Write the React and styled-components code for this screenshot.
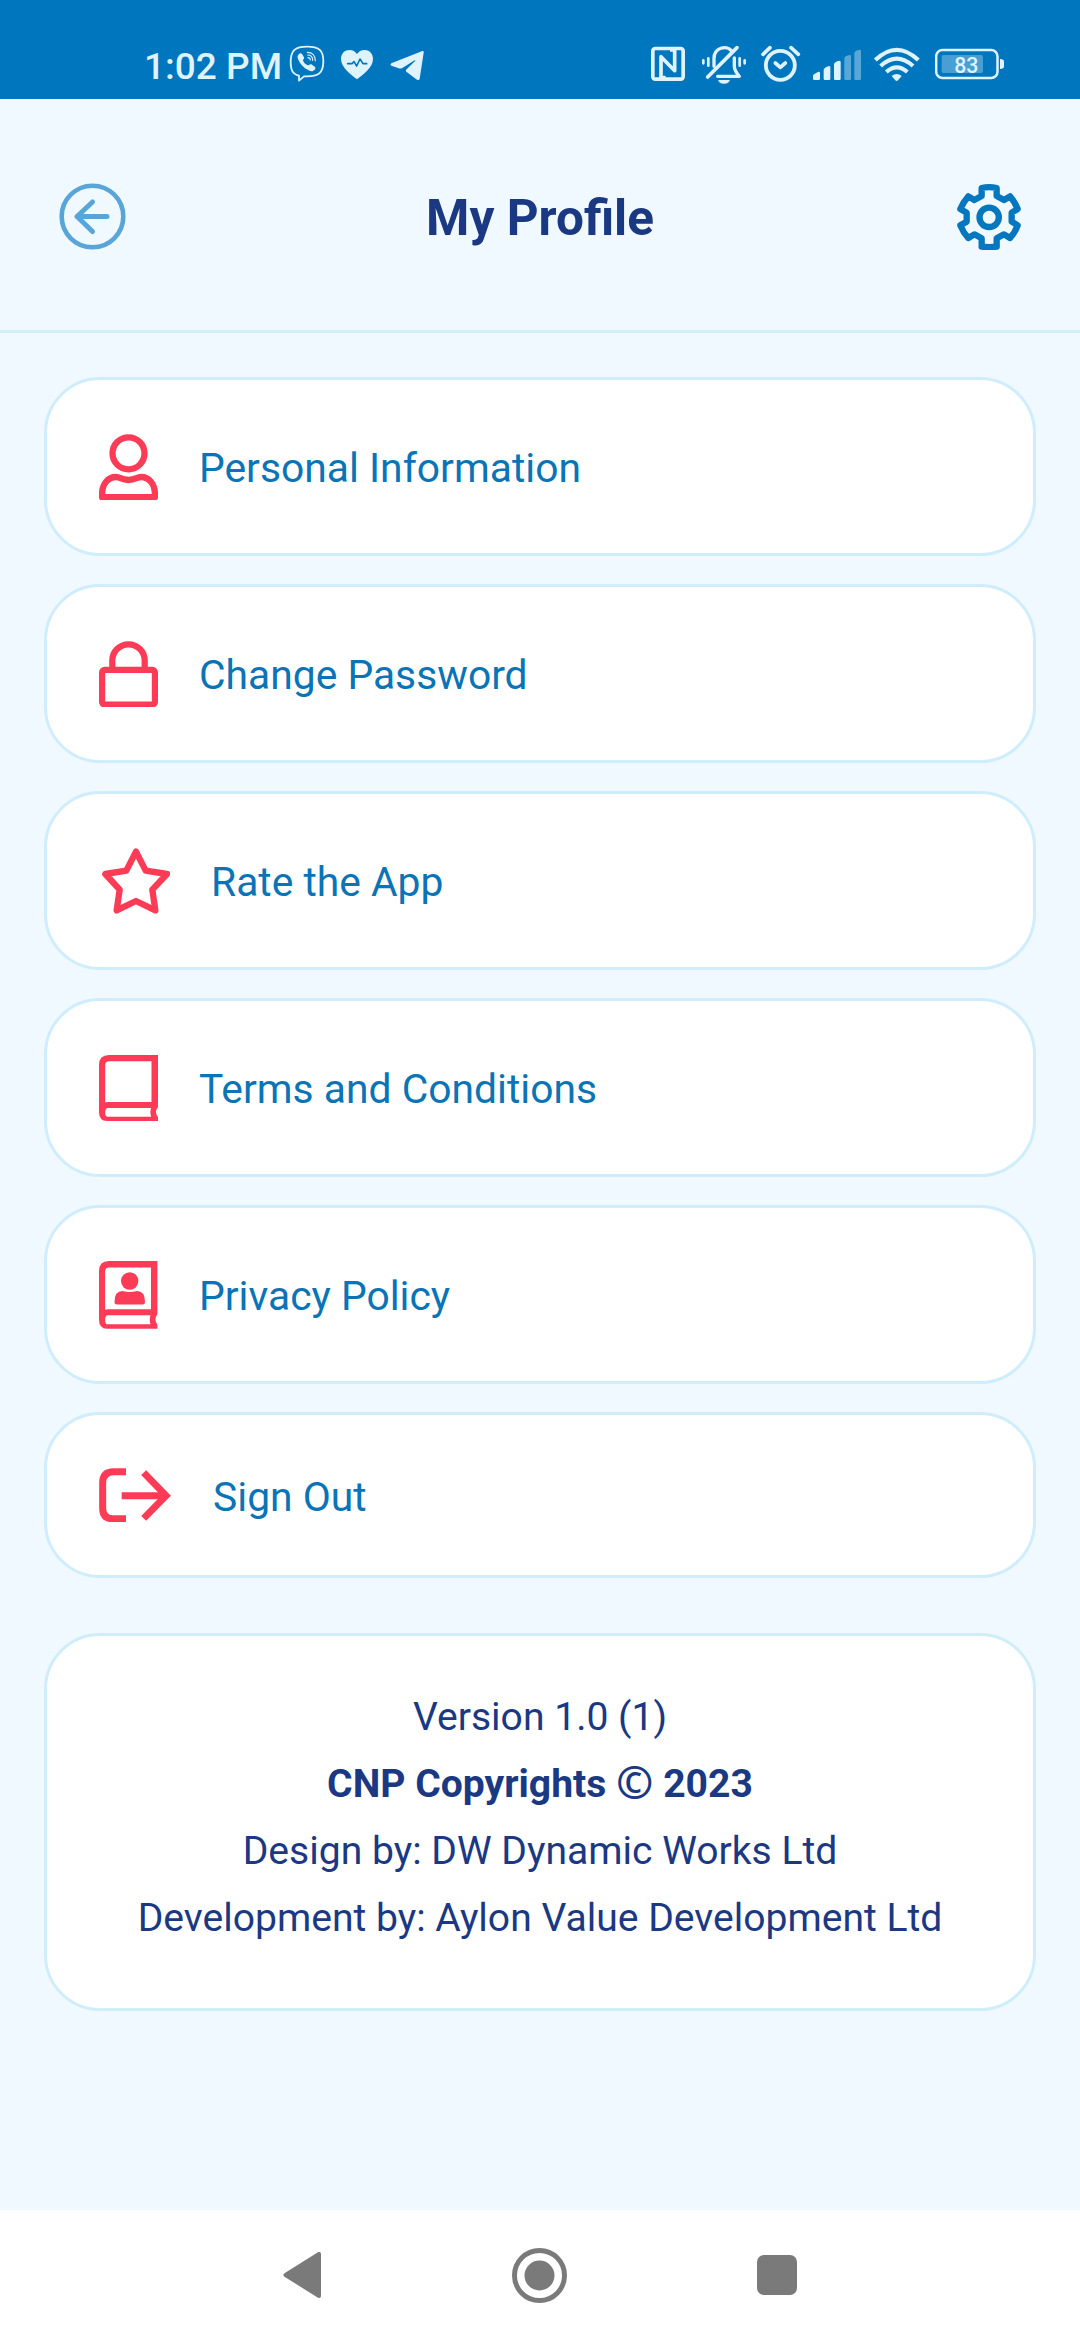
import React from "react";
import styled, { createGlobalStyle } from "styled-components";

const GlobalStyle = createGlobalStyle`
  * {
    box-sizing: border-box;
  }

  body {
    margin: 0;
    background: #f0f9ff;
    font-family: Roboto, "Noto Sans", sans-serif;
  }
`;

const Screen = styled.div`
  display: flex;
  flex-direction: column;
  width: 1080px;
  height: 2340px;
  overflow: hidden;
  background: #f0f9ff;
`;

const StatusBar = styled.div`
  display: flex;
  justify-content: space-between;
  flex: none;
  height: 99px;
  padding: 43px 76px 0 144px;
  background: #0076bf;
  color: #dff3fe;
`;

const StatusGroup = styled.div`
  display: flex;
  gap: ${(props) => props.$gap}px;
`;

const Time = styled.div`
  width: 145px;
  height: 42px;
  padding-top: 2px;
  font-size: 37px;
  font-weight: 500;
  line-height: 43px;
  white-space: nowrap;
`;

const StatusSvg = styled.svg`
  display: block;
  flex: none;
  width: ${(props) => props.$width}px;
  height: 42px;
  fill: currentColor;
`;

const Header = styled.header`
  display: grid;
  grid-template-columns: 1fr auto 1fr;
  align-items: center;
  flex: none;
  height: 234px;
  padding: 4px 59px 0;
  border-bottom: 3px solid #d2effb;
`;

const Title = styled.h1`
  margin: 0;
  padding-top: 3px;
  color: #1b3883;
  font-size: 49.5px;
  font-weight: 700;
  line-height: 60px;
`;

const IconButton = styled.button`
  display: flex;
  justify-self: ${(props) => props.$align};
  padding: 0;
  border: 0;
  background: none;
  color: ${(props) => props.$color};
`;

const Content = styled.main`
  flex: 1;
  padding: 44px 44px 0;
`;

const Menu = styled.nav`
  display: flex;
  flex-direction: column;
  gap: 28px;
`;

const MenuItem = styled.a`
  display: flex;
  align-items: center;
  gap: 41px;
  height: ${(props) => props.$height || 179}px;
  padding: 0 52px;
  border: 3px solid #d0edfd;
  border-radius: 56px;
  background: #fff;
  color: #fc3b56;
`;

const Label = styled.span`
  padding-top: 3px;
  color: #0a74b6;
  font-size: 40.8px;
  line-height: 50px;
`;

const About = styled.section`
  height: 378px;
  margin-top: 55px;
  padding-top: 48px;
  border: 3px solid #d0edfa;
  border-radius: 56px;
  background: #fff;
  text-align: center;
`;

const AboutLine = styled.p`
  height: 67px;
  margin: 0;
  color: #1b3883;
  font-size: 39.1px;
  font-weight: ${(props) => (props.$bold ? 700 : 400)};
  line-height: 67px;
`;

const CopyrightSign = styled.span`
  font-family: "Noto Sans", sans-serif;
  font-size: 1.15em;
  font-weight: 600;
  line-height: 1;
  vertical-align: -2px;
`;

const NavBar = styled.footer`
  display: flex;
  align-items: center;
  justify-content: space-between;
  flex: none;
  height: 130px;
  padding: 0 283px;
  background: #fff;
  color: #7a7a7a;
`;

const Svg = styled.svg`
  display: block;
  flex: none;
  fill: none;
  stroke: currentColor;
`;

const ViberIcon = () => (
  <StatusSvg $width={36} viewBox="477 39 108 126">
    <path
      d="M531 50C495 50 483 61 482 94c0 26 5 38 25 43v15l15-13c44 2 58-9 58-45 0-33-12-44-49-44Z"
      fill="none"
      stroke="currentColor"
      strokeWidth="5.500"
      strokeLinejoin="round"
    />
    <path d="M507 72c4-4 8-3 11 3l4 7c2 4-3 6-3 9 2 8 8 13 15 15 4 0 5-5 10-3l10 7c5 4 1 9-4 12-5 4-10 1-14-1-16-8-26-19-32-34-2-6-2-10 3-15Z" />
    <path
      d="M532 67c15 0 24 10 24 25M533 75c10 0 15 7 15 16M534 83c5 0 7 3 7 7"
      fill="none"
      stroke="currentColor"
      strokeWidth="3.500"
      strokeLinecap="round"
    />
  </StatusSvg>
);

const HeartIcon = () => (
  <StatusSvg $width={35} viewBox="630 39 105 126">
    <path d="M681 148C664 134 633 113 633 87c0-17 12-27 25-27 11 0 18 5 23 12 5-7 12-12 23-12 13 0 25 10 25 27 0 26-31 47-48 61Z" />
    <path
      d="M653 101h13l6-6 8 13 10-21 9 14h11"
      fill="none"
      stroke="#0076bf"
      strokeWidth="5"
      strokeLinejoin="round"
      strokeLinecap="round"
    />
  </StatusSvg>
);

const TelegramIcon = () => (
  <StatusSvg $width={34} viewBox="780 39 102 126">
    <path d="M784 100 877 63q5-1 4 5l-12 78q-2 6-8 3l-31-23q-5-4 0-8l26-26q1-2-2-1l-37 23q-7 3-13 0l-20-7q-5-3 0-7Z" />
  </StatusSvg>
);

const NfcIcon = () => (
  <StatusSvg $width={38} viewBox="33 39 114 126">
    <g fill="none" stroke="currentColor" strokeLinejoin="round">
      <rect x="38.500" y="55.500" width="91" height="92" rx="7" strokeWidth="11" />
      <path d="M77 143H63V80L104 122V60H90" strokeWidth="11" />
    </g>
  </StatusSvg>
);

const MutedBellIcon = () => (
  <StatusSvg $width={47} viewBox="183 39 141 126">
    <g
      fill="none"
      stroke="currentColor"
      strokeWidth="10"
      strokeLinecap="round"
      strokeLinejoin="round"
    >
      <path d="M203 141 291 53" strokeWidth="11" />
      <path d="M222 109V86c0-34 38-41 52-24" />
      <path d="M283 84v25q0 13 15 30h-65" />
      <path d="M190 91v9M205 85v22M299 85v22M314 91v9" strokeWidth="8" />
    </g>
    <path d="M234 150h36q-3 11-18 11t-18-11Z" />
  </StatusSvg>
);

const AlarmIcon = () => (
  <StatusSvg $width={41} viewBox="360 39 123 126">
    <g fill="none" stroke="currentColor" strokeLinecap="round">
      <circle cx="421" cy="106" r="43.500" strokeWidth="11.500" />
      <path d="m406 99 15 13 15-13" strokeWidth="11" strokeLinejoin="round" />
      <path d="m369 73 21-20M475 73l-22-20" strokeWidth="11" />
    </g>
  </StatusSvg>
);

const SignalIcon = () => (
  <StatusSvg $width={48} viewBox="519 39 144 126">
    <path d="M519 136q3-5 17-11 4 0 4 4v17q0 4-4 4h-13q-4 0-4-4ZM551 119q3-7 16-11 4 0 4 4v34q0 4-4 4h-12q-4 0-4-4ZM582 102q3-7 16-10 4 0 4 4v50q0 4-4 4h-12q-4 0-4-4Z" />
    <path
      d="M613 84q3-7 16-9 4 0 4 4v67q0 4-4 4h-12q-4 0-4-4ZM643 68q3-7 16-9 4 0 4 4v83q0 4-4 4h-12q-4 0-4-4Z"
      opacity=".4"
    />
  </StatusSvg>
);

const WifiIcon = () => (
  <StatusSvg $width={50} viewBox="699 39 150 126">
    <path
      d="M706 90q64-61 129 0M722 108q48-44 97 0M739 126q31-28 63 0"
      fill="none"
      stroke="currentColor"
      strokeWidth="12.500"
    />
    <path d="M755 138q15-12 30 0l-11 13q-4 4-8 0Z" />
  </StatusSvg>
);

const BatteryIcon = () => (
  <StatusSvg $width={69} viewBox="885 39 207 126">
    <rect
      x="888.500"
      y="60"
      width="184"
      height="84"
      rx="19"
      fill="none"
      stroke="currentColor"
      strokeWidth="7.500"
    />
    <rect x="905" y="75" width="124" height="54" rx="5" opacity=".33" />
    <path d="M1080 87q12 0 12 8v14q0 8-12 8Z" />
    <text
      x="979"
      y="128"
      fontFamily="Roboto, sans-serif"
      fontSize="64"
      fontWeight="500"
      textAnchor="middle"
    >
      83
    </text>
  </StatusSvg>
);

const BackIcon = () => (
  <Svg width="67" height="67" viewBox="0 0 67 67" strokeLinecap="round" strokeLinejoin="round">
    <circle cx="33.500" cy="33.500" r="30.800" strokeWidth="4.600" />
    <path d="M48 33.500H18M33.500 19 18 33.500l15.500 15" strokeWidth="5" />
  </Svg>
);

const GearIcon = () => (
  <Svg width="64" height="66" viewBox="111 72 192 198" strokeWidth="19" strokeLinejoin="round">
    <path d="M185 108V84q22-5 45 0v24l22 12 18-11q15 17 23 38l-18 11v27l18 11q-8 22-23 38l-18-11-22 12v25q-23 3-45 0v-25l-22-12-18 11q-15-16-24-38l19-11v-27l-19-11q9-21 24-38l18 11Z" />
    <circle cx="207.500" cy="172" r="29" />
  </Svg>
);

const PersonIcon = () => (
  <Svg width="59" height="66" viewBox="0 0 59 66" strokeWidth="6.300">
    <circle cx="29.500" cy="19.300" r="16" />
    <path
      d="M3.100 63.200V60C3.100 50 9 43 17 43c4.500 0 5 3 12.500 3S37.500 43 42 43c8 0 13.900 7 13.900 17v3.200Z"
      strokeLinejoin="round"
    />
  </Svg>
);

const LockIcon = () => (
  <Svg width="59" height="66" viewBox="0 0 59 66" strokeWidth="6.200">
    <rect x="3.100" y="28.900" width="52.800" height="34.600" rx="2.500" />
    <path d="M13.300 29V19.500a16.200 16.200 0 0 1 32.400 0V29" />
  </Svg>
);

const StarIcon = () => (
  <Svg width="71" height="66" viewBox="207 187 213 198" strokeWidth="19" strokeLinejoin="round">
    <path d="m318 198 29 57 64 10-44 47 9 62-58-28-58 28 9-62-43-47 63-10Z" />
  </Svg>
);

const bookPath =
  "M10 0H59V52Q55 57 59 62V66H8Q0 66 0 57V10Q0 0 10 0ZM10 6.300Q6.200 6.300 6.200 10.500V47.500L9 47H52.500V6.300ZM9 53Q6.200 53 6.200 57.500T9 61.800H52Q50.500 57 52 53Z";

const BookIcon = () => (
  <Svg width="59" height="66" viewBox="0 0 59 66">
    <path d={bookPath} fill="currentColor" stroke="none" fillRule="evenodd" />
  </Svg>
);

const PrivacyIcon = () => (
  <Svg width="59" height="69" viewBox="0 0 59 69">
    <g fill="currentColor" stroke="none">
      <path d={bookPath} fillRule="evenodd" transform="translate(0 1) scale(.99 1.025)" />
      <circle cx="30.700" cy="21" r="8.700" />
      <path d="M15.500 42Q15.500 31 23.500 31q7 2 14.500 0 8 0 8 11 0 2.500-2.500 2.500H18q-2.500 0-2.500-2.500Z" />
    </g>
  </Svg>
);

const SignOutIcon = () => (
  <Svg width="73" height="54" viewBox="207 205 219 162" strokeWidth="21">
    <path d="M288 216h-37q-33 0-33 34v75q0 32 29 32h41M275 288h130" />
    <path d="m341 219 67 69-67 68" />
  </Svg>
);

const menuItems = [
  { label: "Personal Information", icon: <PersonIcon /> },
  { label: "Change Password", icon: <LockIcon /> },
  { label: "Rate the App", icon: <StarIcon /> },
  { label: "Terms and Conditions", icon: <BookIcon /> },
  { label: "Privacy Policy", icon: <PrivacyIcon /> },
  { label: "Sign Out", icon: <SignOutIcon />, height: 166 },
];

const App = () => {
  return (
    <Screen>
      <GlobalStyle />
      <StatusBar>
        <StatusGroup $gap={0}>
          <Time>1:02 PM</Time>
          <StatusGroup $gap={15}>
            <ViberIcon />
            <HeartIcon />
            <TelegramIcon />
          </StatusGroup>
        </StatusGroup>
        <StatusGroup $gap={12}>
          <NfcIcon />
          <MutedBellIcon />
          <AlarmIcon />
          <SignalIcon />
          <WifiIcon />
          <BatteryIcon />
        </StatusGroup>
      </StatusBar>
      <Header>
        <IconButton $color="#5aa5d8" $align="start" aria-label="Back">
          <BackIcon />
        </IconButton>
        <Title>My Profile</Title>
        <IconButton $color="#0577bf" $align="end" aria-label="Settings">
          <GearIcon />
        </IconButton>
      </Header>
      <Content>
        <Menu>
          {menuItems.map((item) => (
            <MenuItem key={item.label} $height={item.height}>
              {item.icon}
              <Label>{item.label}</Label>
            </MenuItem>
          ))}
        </Menu>
        <About>
          <AboutLine>Version 1.0 (1)</AboutLine>
          <AboutLine $bold>
            CNP Copyrights <CopyrightSign>©</CopyrightSign> 2023
          </AboutLine>
          <AboutLine>Design by: DW Dynamic Works Ltd</AboutLine>
          <AboutLine>Development by: Aylon Value Development Ltd</AboutLine>
        </About>
      </Content>
      <NavBar>
        <Svg width="38" height="46" viewBox="0 0 38 46" strokeWidth="4" strokeLinejoin="round">
          <path d="M36 2v42L2.500 23Z" fill="currentColor" />
        </Svg>
        <Svg width="55" height="55" viewBox="0 0 55 55" strokeWidth="5">
          <circle cx="27.500" cy="27.500" r="25" />
          <circle cx="27.500" cy="27.500" r="15" fill="currentColor" stroke="none" />
        </Svg>
        <Svg width="40" height="40" viewBox="0 0 40 40">
          <rect width="40" height="40" rx="7" fill="currentColor" stroke="none" />
        </Svg>
      </NavBar>
    </Screen>
  );
};

export default App;
